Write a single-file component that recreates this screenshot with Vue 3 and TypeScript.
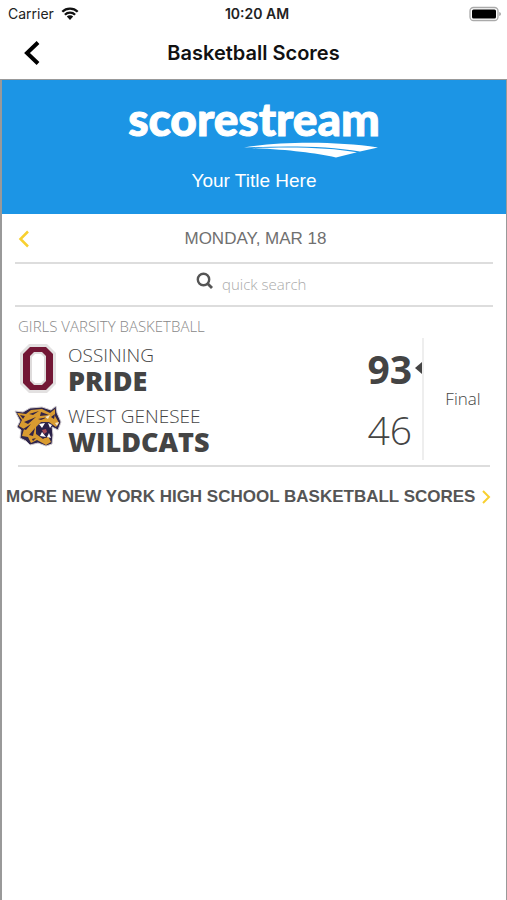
<script setup lang="ts">
import { ref } from 'vue'

interface Team {
  id: string
  school: string
  mascot: string
  score: number
}

const title = 'Basketball Scores'
const league = 'Girls Varsity Basketball'
const search = ref('')
const teams: Team[] = [
  { id: 'ossining', school: 'Ossining', mascot: 'Pride', score: 93 },
  { id: 'genesee', school: 'West Genesee', mascot: 'Wildcats', score: 46 },
]
const topScore = Math.max(...teams.map((t) => t.score))
</script>

<template>
  <div class="screen">
    <div class="status">
      <div class="carrier">
        <span>Carrier</span>
        <svg width="18" height="14" viewBox="0 0 18 14" aria-hidden="true">
          <path d="M1.3 4.8a11 11 0 0 1 15.4 0M3.9 7.7a7.2 7.2 0 0 1 10.2 0" fill="none" stroke="#111" stroke-width="2.3" />
          <path d="M5.800 9.600a4.500 4.500 0 0 1 6.400 0L9 13z" fill="#111" />
        </svg>
      </div>
      <span class="clock">10:20 AM</span>
      <svg class="battery" width="33" height="16" viewBox="0 0 33 16" aria-hidden="true">
        <rect x="1" y="1.5" width="28" height="13" rx="3.5" fill="#fff" stroke="#aaa" stroke-width="1.3" />
        <rect x="3" y="3.5" width="24" height="9" rx="1.5" fill="#000" />
        <path d="M30.3 6v4q1.6-.6 1.6-2t-1.6-2" fill="#999" />
      </svg>
    </div>

    <header class="nav">
      <button class="back" type="button" aria-label="Back">
        <svg width="18" height="26" viewBox="0 0 18 26"><path d="M15 2.500 4 13l11 10.500" fill="none" stroke="#000" stroke-width="4" /></svg>
      </button>
      <h1>{{ title }}</h1>
    </header>

    <main class="board">
      <section class="banner">
        <div class="brand">
          <span class="wordmark">scorestream</span>
          <svg class="swoosh" width="136" height="17" viewBox="0 0 136 17" aria-hidden="true">
            <path d="M0 5.500C36-.5 90-1 134 5.400L116 9.600C82 3.500 38 4 0 5.500Z" fill="#fff" />
            <path d="M8 6.200C54 4.600 87 6 113 10.300L92 15.400C70 11 46 7.500 8 6.200Z" fill="#fff" />
          </svg>
        </div>
        <p>Your Title Here</p>
      </section>

      <div class="date">
        <button type="button" aria-label="Previous day">
          <svg width="12" height="18" viewBox="0 0 12 18"><path d="M10 1.500 2.500 9l7.500 7.500" fill="none" stroke="#f8d030" stroke-width="2.500" /></svg>
        </button>
        <h2>MONDAY, MAR 18</h2>
      </div>

      <div class="search">
        <label for="quick-search" aria-label="Search">
          <svg width="18" height="18" viewBox="0 0 18 18"><circle cx="7.500" cy="7.500" r="5.700" fill="none" stroke="#555" stroke-width="2.400" /><path d="m11.500 11.500 4.500 4.500" stroke="#555" stroke-width="2.800" /></svg>
        </label>
        <input id="quick-search" v-model="search" type="text" placeholder="quick search" />
      </div>

      <section class="game">
        <h3>{{ league }}</h3>
        <div class="result">
          <div class="teams">
            <div v-for="team in teams" :key="team.id" class="team">
              <svg v-if="team.id === 'ossining'" class="logo" width="48" height="52" viewBox="0 0 48 52" aria-hidden="true">
                <path d="M15 1h18l9 9v31l-9 9H15l-9-9V10z" fill="#e3e1e1" />
                <path d="M16 4h16l7 7v29l-7 7H16l-7-7V11z" fill="#731735" />
                <path d="M20 9h8l4 4v25l-4 4h-8l-4-4V13z" fill="#dedbdb" />
                <path d="M21 11h6l3 3v23l-3 3h-6l-3-3V14z" fill="#fff" />
              </svg>
              <svg v-else class="logo" width="48" height="52" viewBox="0 0 48 52" aria-hidden="true">
                <g transform="translate(0 -5)">
                  <path d="M1 12 9 13 16 9 28 8 37 11 42 7 43 14 47 23 44 31 38 28 39 36 38 45 32 47 24 44 16 46 12 42 6 39 7 31 3 28 6 22z" fill="#30264c" stroke="#d0cbce" stroke-width="1" />
                  <path d="M3 14 12 15 17 11 28 10 36 14 41 10 41 17 45 24 42 28 35 23 27 23 22 28 22 35 29 40 34 37 37 43 32 46 23 41 17 44 14 38 8 37 10 30 5 27 8 21z" fill="#d99b30" />
                  <path d="M6 16l5 1-2 3zM15 15l10-3-6 4zM27 13l8 3-9 1zM10 23l12-5-8 7zM9 30l8-5-5 6zM15 36l6-7-2 8zM24 20l10-2-7 3zM37 18l4-3-1 5zM18 40l4-1-3 3z" fill="#332346" />
                  <path d="m23 29 8-5 6 2 1 9-6 4-7-3z" fill="#292047" />
                  <path d="m25 25 3 4 3-5zM34 24l2 5 2-3zM26 37l2-4 4 5zM33 38l2-4 2 5z" fill="#fff" />
                  <path d="m28 31 4-1 1 3-3 2z" fill="#a84b55" />
                  <path d="m31 18 5-2-2 4zM41 24l4-1-2 4z" fill="#f4e4c5" />
                </g>
              </svg>
              <div class="name">
                <span class="school">{{ team.school }}</span>
                <strong>{{ team.mascot }}</strong>
              </div>
              <span class="score" :class="{ winner: team.score === topScore }">{{ team.score }}</span>
            </div>
          </div>
          <div class="state">Final</div>
        </div>
      </section>

      <a class="more" href="#">
        <span>MORE NEW YORK HIGH SCHOOL BASKETBALL SCORES</span>
        <svg width="10" height="16" viewBox="0 0 10 16" aria-hidden="true"><path d="m2 2 6 6-6 6" fill="none" stroke="#f8d030" stroke-width="2" /></svg>
      </a>
    </main>
  </div>
</template>

<style>
body {
  margin: 0;
  background: #fff;
}
</style>

<style scoped>
* {
  box-sizing: border-box;
}
.screen {
  display: flex;
  flex-direction: column;
  min-height: 100vh;
  font-family: "Liberation Sans", Arial, sans-serif;
  color: #444;
}
h1, h2, h3, p {
  margin: 0;
  font-weight: 400;
}
button {
  display: flex;
  padding: 0;
  border: 0;
  background: none;
}
svg {
  display: block;
  flex: none;
}
.status {
  display: grid;
  grid-template-columns: 1fr auto 1fr;
  align-items: center;
  height: 27px;
  padding: 0 5px 0 8px;
  font: 14px/16px Inter, sans-serif;
  color: #222;
}
.carrier {
  display: flex;
  align-items: center;
  gap: 7px;
}
.clock {
  margin-left: 4px;
  font-weight: 600;
}
.battery {
  justify-self: end;
}
.nav {
  display: grid;
  grid-template-columns: 1fr auto 1fr;
  align-items: center;
  height: 52px;
  padding: 0 23px;
}
.nav h1 {
  font: 600 20px/24px Inter, sans-serif;
  color: #111;
}
.board {
  flex: 1;
  border: solid #999;
  border-width: 1px 1px 0 2px;
}
.banner {
  display: flex;
  flex-direction: column;
  align-items: center;
  height: 134px;
  padding-top: 16px;
  background: #1c95e5;
  color: #fff;
}
.brand {
  display: flex;
  flex-direction: column;
}
.wordmark {
  font: 900 46px/46px Lato, sans-serif;
  -webkit-text-stroke: 1px #fff;
}
.swoosh {
  align-self: flex-end;
}
.banner p {
  margin-top: 10px;
  font-size: 19px;
  line-height: 24px;
}
.date {
  display: grid;
  grid-template-columns: 1fr auto 1fr;
  align-items: center;
  height: 50px;
  margin: 0 13px;
  padding: 2px 0 0 3px;
  border-bottom: 2px solid #ddd;
}
.date h2 {
  font-size: 17px;
  line-height: 24px;
  color: #707070;
}
.search {
  display: flex;
  justify-content: center;
  align-items: center;
  gap: 8px;
  height: 43px;
  margin: 0 13px;
  padding-bottom: 4px;
  border-bottom: 2px solid #ddd;
}
.search label {
  padding-bottom: 4px;
}
.search input {
  width: 90px;
  padding: 2px 0 0;
  border: 0;
  background: none;
  font: 300 15px/24px "Open Sans", sans-serif;
  color: #555;
}
.search input::placeholder {
  color: #aaa;
  opacity: 1;
}
.game {
  margin: 0 16px;
  padding-top: 7px;
  border-bottom: 2px solid #ddd;
}
.game h3 {
  font: 300 15px/24px "Open Sans", sans-serif;
  text-transform: uppercase;
  color: #888;
}
.result {
  display: flex;
  padding-bottom: 5px;
}
.teams {
  flex: 1;
  border-right: 2px solid #eee;
}
.team {
  display: flex;
  align-items: center;
  height: 61px;
}
.logo {
  margin-left: -4px;
}
.name {
  display: flex;
  flex: 1;
  flex-direction: column;
  margin-left: 6px;
  font-family: "Open Sans", sans-serif;
  text-transform: uppercase;
}
.school {
  font-size: 19px;
  font-weight: 300;
  line-height: 24px;
}
.name strong {
  font-size: 27px;
  font-weight: 800;
  line-height: 28px;
}
.score {
  position: relative;
  padding-right: 10px;
  font: 300 39px/48px "Open Sans", sans-serif;
}
.winner {
  font-weight: 700;
}
.winner::after {
  position: absolute;
  top: 17px;
  right: 0;
  border: solid transparent;
  border-width: 6px 7px 6px 0;
  border-right-color: #444;
  content: "";
}
.state {
  display: flex;
  align-items: center;
  justify-content: center;
  width: 66px;
  padding-left: 12px;
  font: 300 17px/24px "Open Sans", sans-serif;
  color: #444;
}
.more {
  display: flex;
  align-items: center;
  gap: 6px;
  height: 60px;
  padding: 0 4px;
  color: #555;
  font-size: 17px;
  font-weight: 700;
  line-height: 24px;
  text-decoration: none;
  white-space: nowrap;
}
</style>
